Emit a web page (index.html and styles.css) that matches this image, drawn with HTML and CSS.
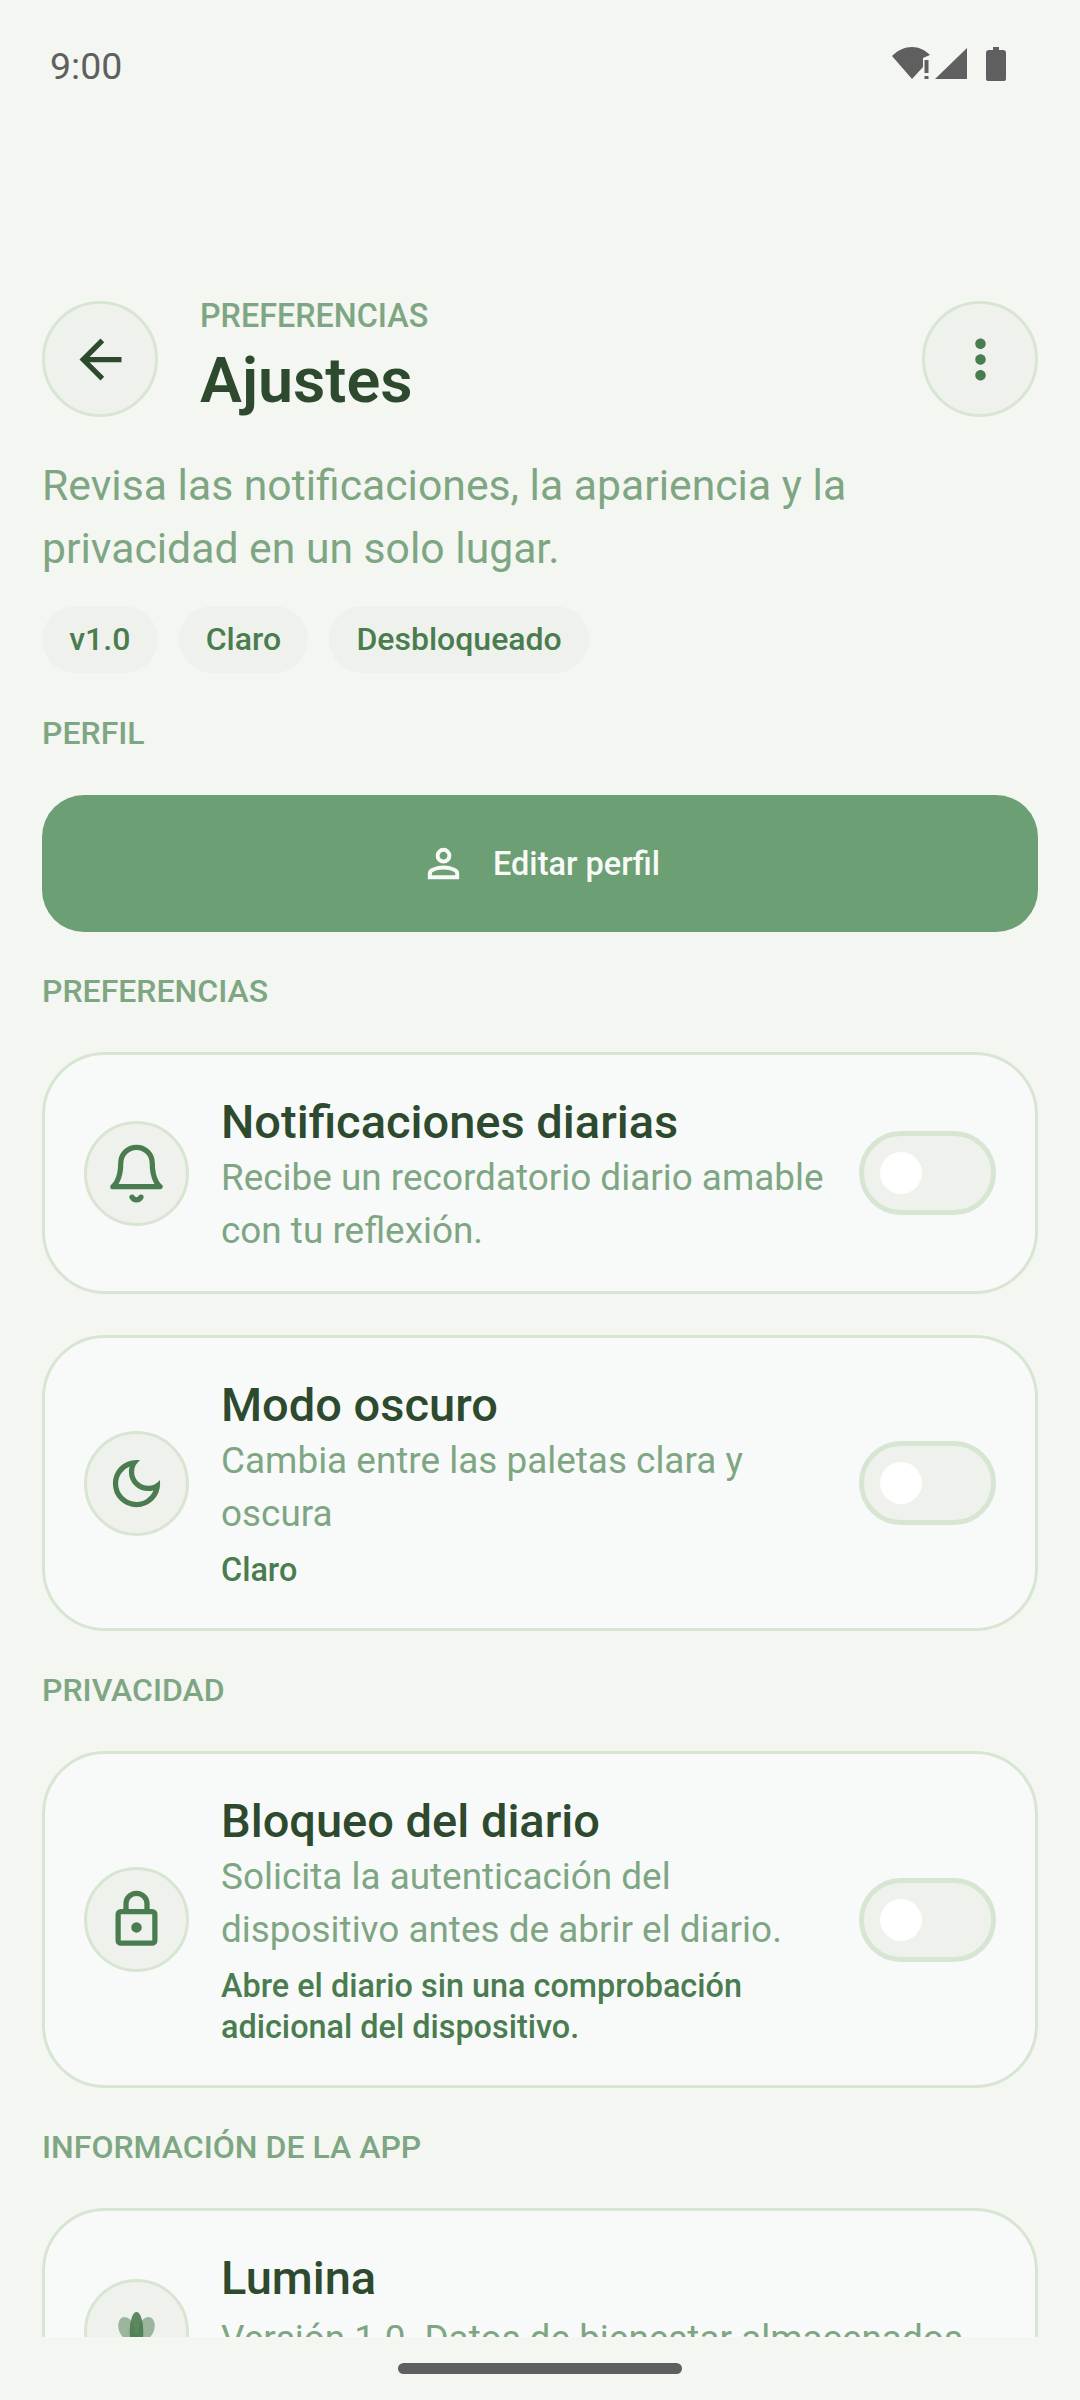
FILE: index.html
```html
<!DOCTYPE html>
<html lang="es">
<head>
<meta charset="utf-8">
<title>Ajustes</title>
<link rel="stylesheet" href="styles.css">
</head>
<body>
<header class="status">
  <span class="clock">9:00</span>
  <svg class="status-icons" viewBox="0 0 116 36" aria-hidden="true">
    <path d="M2 10C8 4 15 1 22 1c7 0 13 3 18 8l-7 3v9L22 33z"/>
    <path d="M34.500 14h4v13h-4zM34.500 30h4v3h-4z"/>
    <path d="M45 33 77 2v31z"/>
    <path d="M103 1h6v3h4a3 3 0 0 1 3 3v26a2 2 0 0 1-2 2H98a2 2 0 0 1-2-2V7a3 3 0 0 1 3-3h4z"/>
  </svg>
</header>

<main class="scroll">
  <div class="topbar">
    <button class="round-btn">
      <svg class="icon icon-dark" viewBox="0 0 24 24"><path d="M20 11H7.830l5.590-5.590L12 4l-8 8 8 8 1.410-1.410L7.830 13H20v-2z"/></svg>
    </button>
    <div class="heading">
      <div class="eyebrow">PREFERENCIAS</div>
      <h1 class="page-title">Ajustes</h1>
    </div>
    <button class="round-btn">
      <svg class="icon icon-mid" viewBox="0 0 24 24"><path d="M12 8c1.100 0 2-.9 2-2s-.9-2-2-2-2 .9-2 2 .9 2 2 2zm0 2c-1.100 0-2 .9-2 2s.9 2 2 2 2-.9 2-2-.9-2-2-2zm0 6c-1.100 0-2 .9-2 2s.9 2 2 2 2-.9 2-2-.9-2-2-2z"/></svg>
    </button>
  </div>

  <p class="intro">Revisa las notificaciones, la apariencia y la privacidad en un solo lugar.</p>

  <div class="chips">
    <span class="chip">v1.0</span>
    <span class="chip">Claro</span>
    <span class="chip">Desbloqueado</span>
  </div>

  <h2 class="section-label">PERFIL</h2>
  <button class="primary-btn">
    <svg class="btn-icon" viewBox="0 0 24 24"><path fill-rule="evenodd" d="M12 12q-1.650 0-2.825-1.175Q8 9.650 8 8q0-1.650 1.175-2.825Q10.350 4 12 4q1.650 0 2.825 1.175Q16 6.350 16 8q0 1.650-1.175 2.825Q13.650 12 12 12Zm-8 8v-2.800q0-.85.438-1.563.437-.712 1.162-1.087 1.550-.775 3.150-1.163Q10.350 13 12 13t3.250.387q1.600.388 3.150 1.163.725.375 1.162 1.087Q20 16.350 20 17.200V20Zm2-2h12v-.8q0-.275-.137-.5-.138-.225-.363-.35-1.350-.675-2.725-1.013Q13.350 15 12 15t-2.725.337Q7.900 15.675 6.550 16.350q-.225.125-.362.35-.138.225-.138.5Zm6-8q.825 0 1.413-.588Q14 8.825 14 8q0-.825-.587-1.412Q12.825 6 12 6q-.825 0-1.412.588Q10 7.175 10 8q0 .825.588 1.412Q11.175 10 12 10Z"/></svg>
    <span>Editar perfil</span>
  </button>

  <h2 class="section-label">PREFERENCIAS</h2>
  <div class="card-list">
    <section class="card">
      <span class="card-icon">
        <svg class="icon icon-stroke" viewBox="0 0 24 24"><path d="M6 8a6 6 0 0 1 12 0c0 7 3 9 3 9H3s3-2 3-9"/><path d="M10.300 21a1.940 1.940 0 0 0 3.400 0"/></svg>
      </span>
      <div class="card-text">
        <h3 class="card-title">Notificaciones diarias</h3>
        <p class="card-desc">Recibe un recordatorio diario amable con tu reflexión.</p>
      </div>
      <span class="toggle"><span class="knob"></span></span>
    </section>

    <section class="card">
      <span class="card-icon">
        <svg class="icon icon-mid" viewBox="0 0 24 24"><path fill-rule="evenodd" d="M12 21q-3.750 0-6.375-2.625T3 12q0-3.750 2.625-6.375T12 3q.35 0 .688.025.337.025.662.075-1.025.725-1.637 1.887Q11.100 6.150 11.100 7.500q0 2.250 1.575 3.825Q14.250 12.900 16.500 12.900q1.375 0 2.525-.613 1.150-.612 1.875-1.637.05.325.075.662Q21 11.650 21 12q0 3.750-2.625 6.375T12 21Zm0-2q2.200 0 3.950-1.212 1.750-1.213 2.550-3.163-.5.125-1 .2-.5.075-1 .075-3.075 0-5.238-2.162Q9.100 10.575 9.100 7.500q0-.5.075-1t.2-1q-1.950.8-3.163 2.550Q5 9.800 5 12q0 2.900 2.050 4.950Q9.100 19 12 19Z"/></svg>
      </span>
      <div class="card-text">
        <h3 class="card-title">Modo oscuro</h3>
        <p class="card-desc">Cambia entre las paletas clara y oscura</p>
        <p class="card-note">Claro</p>
      </div>
      <span class="toggle"><span class="knob"></span></span>
    </section>
  </div>

  <h2 class="section-label">PRIVACIDAD</h2>
  <div class="card-list">
    <section class="card">
      <span class="card-icon">
        <svg class="icon icon-mid" viewBox="0 0 24 24"><path fill-rule="evenodd" d="M6 22q-.825 0-1.412-.587Q4 20.825 4 20V10q0-.825.588-1.412Q5.175 8 6 8h1V6q0-2.075 1.463-3.538Q9.925 1 12 1t3.538 1.462Q17 3.925 17 6v2h1q.825 0 1.413.588Q20 9.175 20 10v10q0 .825-.587 1.413Q18.825 22 18 22Zm0-2h12V10H6v10Zm6-3q.825 0 1.413-.587Q14 15.825 14 15q0-.825-.587-1.412Q12.825 13 12 13q-.825 0-1.412.588Q10 14.175 10 15q0 .825.588 1.413Q11.175 17 12 17ZM9 8h6V6q0-1.250-.875-2.125T12 3q-1.250 0-2.125.875T9 6Z"/></svg>
      </span>
      <div class="card-text">
        <h3 class="card-title">Bloqueo del diario</h3>
        <p class="card-desc">Solicita la autenticación del dispositivo antes de abrir el diario.</p>
        <p class="card-note">Abre el diario sin una comprobación adicional del dispositivo.</p>
      </div>
      <span class="toggle"><span class="knob"></span></span>
    </section>
  </div>

  <h2 class="section-label">INFORMACIÓN DE LA APP</h2>
  <div class="card-list">
    <section class="card card-about">
      <span class="card-icon">
        <svg class="icon" viewBox="0 0 24 24">
          <g class="petals">
            <ellipse cx="8.200" cy="10.800" rx="3" ry="4.400" transform="rotate(-18 8.200 10.800)"/>
            <ellipse cx="15.800" cy="10.800" rx="3" ry="4.400" transform="rotate(18 15.800 10.800)"/>
            <ellipse cx="8.700" cy="16.500" rx="3.200" ry="5" transform="rotate(40 8.700 16.500)"/>
            <ellipse cx="15.300" cy="16.500" rx="3.200" ry="5" transform="rotate(-40 15.300 16.500)"/>
          </g>
          <ellipse class="petal-core" cx="12" cy="12" rx="2.600" ry="7.400"/>
        </svg>
      </span>
      <div class="card-text">
        <h3 class="card-title">Lumina</h3>
        <p class="card-desc">Versión 1.0. Datos de bienestar almacenados en este dispositivo.</p>
      </div>
    </section>
  </div>
</main>

<footer class="gesture-bar"><span class="gesture-pill"></span></footer>
</body>
</html>
```

FILE: styles.css
```css
* { box-sizing: border-box; }

html, body {
  margin: 0;
  height: 2400px;
  overflow: hidden;
}

body {
  display: flex;
  flex-direction: column;
  background: #f4f6f1;
  font-family: Roboto, "Noto Sans", sans-serif;
  color: #2d4a2f;
}

/* System bars */
.status {
  flex: none;
  height: 126px;
  display: flex;
  justify-content: space-between;
  align-items: flex-start;
  padding: 45px 74px 0 50px;
}

.clock {
  font-size: 37.5px;
  line-height: 42px;
  color: #5f5f5f;
}

.status-icons {
  width: 116px;
  height: 36px;
  margin-top: 1px;
  fill: #5f5f5f;
}

.gesture-bar {
  flex: none;
  height: 63px;
  display: flex;
  justify-content: center;
  padding-top: 26px;
}

.gesture-pill {
  width: 284px;
  height: 11px;
  border-radius: 6px;
  background: #5f5f5f;
}

/* Scrolling content */
.scroll {
  flex: 1;
  min-height: 0;
  overflow: hidden;
  padding: 169px 42px 0;
}

.topbar {
  display: flex;
  align-items: flex-start;
  gap: 42px;
}

.round-btn {
  flex: none;
  width: 116px;
  height: 116px;
  margin-top: 6px;
  padding: 0;
  display: flex;
  align-items: center;
  justify-content: center;
  border: 3px solid #d6e6d2;
  border-radius: 50%;
  background: #eff2ec;
}

.heading { flex: 1; }

.eyebrow {
  font-size: 32.3px;
  line-height: 42px;
  font-weight: 500;
  color: #7ea683;
}

.page-title {
  margin: 0 0 2px;
  font-size: 62.8px;
  line-height: 88px;
  font-weight: 600;
  color: #2d4a2f;
}

.icon {
  width: 63px;
  height: 63px;
  flex: none;
}

.icon-dark { fill: #2d4a2f; }
.icon-mid { fill: #4a7c50; }

.icon-stroke {
  fill: none;
  stroke: #4a7c50;
  stroke-width: 2;
  stroke-linecap: round;
  stroke-linejoin: round;
}

.intro {
  max-width: 960px;
  margin: 27px 0 0;
  font-size: 42.7px;
  line-height: 63px;
  color: #7ea683;
}

.chips {
  display: flex;
  gap: 21px;
  margin-top: 26px;
}

.chip {
  height: 67px;
  padding: 0 27.2px 2px;
  display: flex;
  align-items: center;
  border-radius: 34px;
  background: #eff2ec;
  font-size: 32px;
  font-weight: 500;
  color: #4a7c50;
}

.section-label {
  margin: 38px 0 40px;
  font-size: 32px;
  line-height: 42px;
  font-weight: 500;
  color: #7ea683;
}

.section-label:first-of-type {
  margin-top: 39px;
  margin-bottom: 41px;
}

.primary-btn {
  width: 100%;
  height: 137px;
  display: flex;
  align-items: center;
  justify-content: center;
  gap: 26px;
  border: 0;
  border-radius: 42px;
  background: #6c9f73;
  font-family: inherit;
  font-size: 32.5px;
  font-weight: 500;
  color: #f8faf8;
}

.btn-icon {
  width: 47px;
  height: 47px;
  fill: #f8faf8;
}

/* Setting cards */
.card-list {
  display: flex;
  flex-direction: column;
  gap: 41px;
}

.card {
  display: flex;
  align-items: center;
  gap: 32px;
  padding: 36px 39px;
  border: 3px solid #d6e6d2;
  border-radius: 63px;
  background: #f8faf9;
}

.card-about .card-desc { margin-top: 5px; }

.card-icon {
  flex: none;
  width: 105px;
  height: 105px;
  display: flex;
  align-items: center;
  justify-content: center;
  border: 3px solid #d6e6d2;
  border-radius: 50%;
  background: #eff2ec;
}

/* Text block sits a little low in the card without moving the icon or switch */
.card-text {
  flex: 1;
  min-width: 0;
  margin: 2px -11px -2px 0;
}

.card-title {
  margin: 0;
  font-size: 47px;
  line-height: 58px;
  font-weight: 500;
  color: #2d4a2f;
}

.card-desc {
  margin: 0;
  font-size: 36.9px;
  line-height: 53px;
  color: #7ea683;
}

.card-note {
  margin: 10px 0 3px;
  font-size: 32.4px;
  line-height: 41px;
  font-weight: 500;
  color: #4a7c50;
}

.toggle {
  flex: none;
  width: 137px;
  height: 84px;
  padding: 0 16px;
  display: flex;
  align-items: center;
  border: 5.5px solid #d6e6d2;
  border-radius: 42px;
  background: #eff2ec;
}

.knob {
  width: 42px;
  height: 42px;
  border-radius: 50%;
  background: #fff;
}

.petals { fill: #4a7c50; opacity: .5; }
.petal-core { fill: #4a7c50; opacity: .9; }
```
